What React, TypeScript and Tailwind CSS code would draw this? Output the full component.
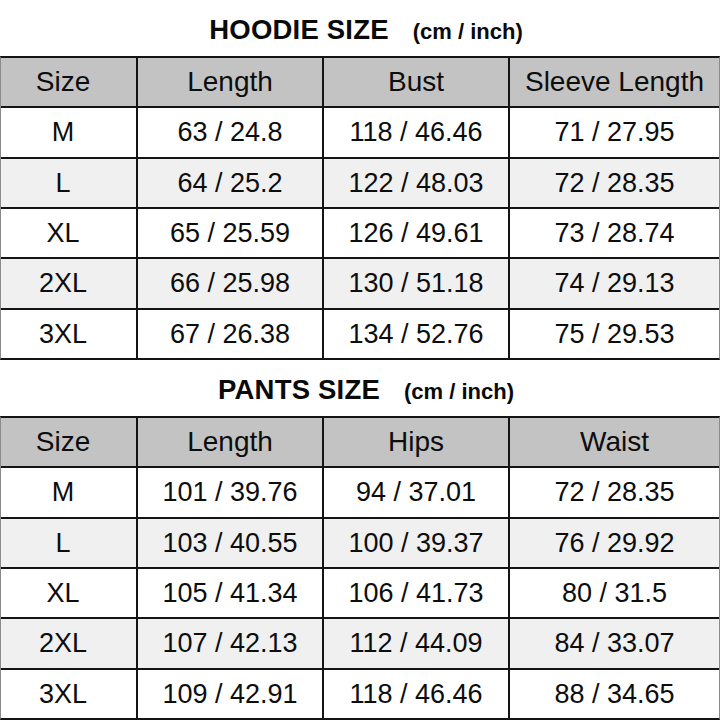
import React from "react";

type Table = { title: string; headers: string[]; rows: string[][] };

const tables: Table[] = [
  {
    title: "HOODIE SIZE",
    headers: ["Size", "Length", "Bust", "Sleeve Length"],
    rows: [
      ["M", "63 / 24.8", "118 / 46.46", "71 / 27.95"],
      ["L", "64 / 25.2", "122 / 48.03", "72 / 28.35"],
      ["XL", "65 / 25.59", "126 / 49.61", "73 / 28.74"],
      ["2XL", "66 / 25.98", "130 / 51.18", "74 / 29.13"],
      ["3XL", "67 / 26.38", "134 / 52.76", "75 / 29.53"],
    ],
  },
  {
    title: "PANTS SIZE",
    headers: ["Size", "Length", "Hips", "Waist"],
    rows: [
      ["M", "101 / 39.76", "94 / 37.01", "72 / 28.35"],
      ["L", "103 / 40.55", "100 / 39.37", "76 / 29.92"],
      ["XL", "105 / 41.34", "106 / 41.73", "80 / 31.5"],
      ["2XL", "107 / 42.13", "112 / 44.09", "84 / 33.07"],
      ["3XL", "109 / 42.91", "118 / 46.46", "88 / 34.65"],
    ],
  },
];

const colW = ["w-[135px] pr-[11px]", "w-[186px]", "w-[186px]", "flex-1"];

function Row({ cells, bg, header }: { cells: string[]; bg: string; header?: boolean }) {
  return (
    <div className={`flex flex-1 ${bg} ${header ? "" : "border-t-2 border-[#141414]"}`}>
      {cells.map((c, i) => (
        <div
          key={i}
          className={`${colW[i]} flex items-center justify-center ${i > 0 ? "border-l-2 border-[#141414]" : ""} ${
            header ? "text-[28px]" : "text-[27px]"
          } text-[#0d0d0d]`}
        >
          {c}
        </div>
      ))}
    </div>
  );
}

function SizeTable({ t }: { t: Table }) {
  return (
    <div className="flex flex-col">
      <div className="h-[56px] flex items-center justify-center pl-[12px] pt-[4px] font-bold text-[#0a0a0a]">
        <span className="text-[27.5px] tracking-[0.2px]">{t.title}</span>
        <span className="ml-[24px] text-[22px] mt-[2px]">(cm / inch)</span>
      </div>
      <div className="h-[304px] flex flex-col border-y-2 border-[#141414] border-x border-x-[#8a8a8a]">
        <Row cells={t.headers} bg="bg-[#c3c3c3]" header />
        {t.rows.map((r, i) => (
          <Row key={i} cells={r} bg={i % 2 === 1 ? "bg-[#f0f0f0]" : "bg-white"} />
        ))}
      </div>
    </div>
  );
}

export default function App() {
  return (
    <div
      className="w-[720px] h-[720px] bg-white overflow-hidden flex flex-col"
      style={{ fontFamily: '"Liberation Sans", Arial, sans-serif' }}
    >
      <SizeTable t={tables[0]} />
      <SizeTable t={tables[1]} />
    </div>
  );
}
